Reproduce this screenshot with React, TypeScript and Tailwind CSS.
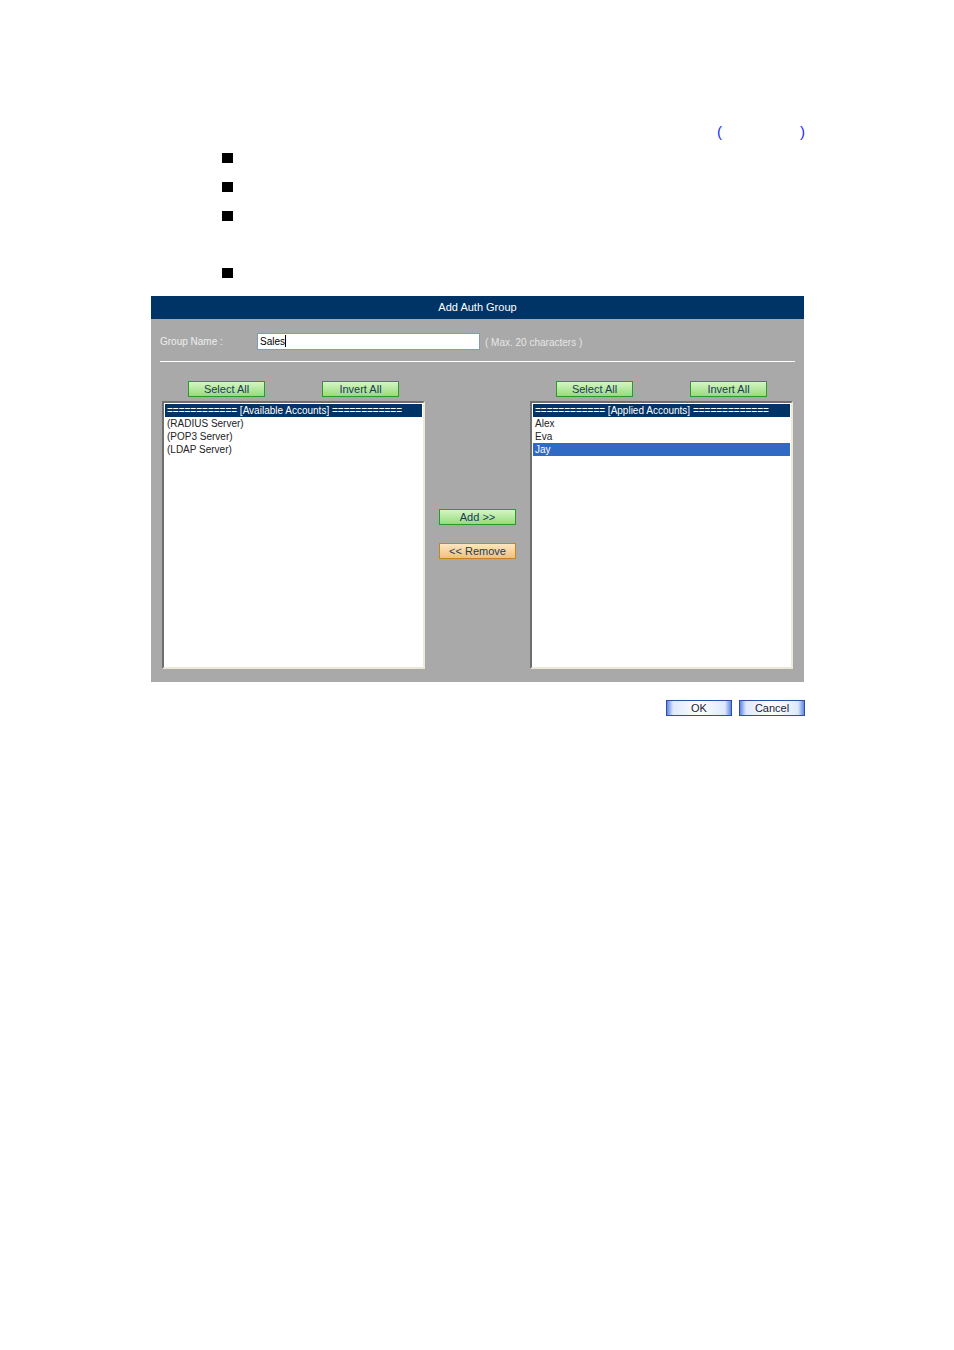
const font = { fontFamily: '"Liberation Sans", Arial, sans-serif' }

function GreenButton({ label }: { label: string }) {
  return (
    <button className="w-[77px] h-[16px] border border-[#2a9a2a] bg-gradient-to-b from-[#d6f5c4] to-[#94dc7c] text-[11px] leading-[13px] text-[#1c3a5c] text-center">
      {label}
    </button>
  )
}

function ListBox({ title, items, selected }: { title: string; items: string[]; selected?: string }) {
  return (
    <div className="w-[263px] h-[268px] bg-white border-t-2 border-l-2 border-t-[#6f6f6f] border-l-[#6f6f6f] border-b-2 border-r-2 border-b-[#ece9d8] border-r-[#ece9d8] p-[1px]">
      <div className="h-[13px] bg-[#003366] text-white text-[10px] leading-[13px] pl-[2px] whitespace-nowrap">
        {title}
      </div>
      {items.map((it) => (
        <div
          key={it}
          className={
            it === selected
              ? 'h-[13px] bg-[#316ac5] text-white text-[10px] leading-[13px] pl-[2px]'
              : 'h-[13px] text-[#222] text-[10px] leading-[13px] pl-[2px]'
          }
        >
          {it}
        </div>
      ))}
    </div>
  )
}

function BlueButton({ label }: { label: string }) {
  return (
    <button className="w-[66px] h-[16px] border border-[#2b4fa8] bg-[linear-gradient(to_right,#5f86e6_0px,#dfe8fb_6px,#ffffff_50%,#dfe8fb_calc(100%-6px),#5f86e6_100%)] text-[11px] leading-[12px] text-[#1a1a3a] text-center">
      {label}
    </button>
  )
}

export default function App() {
  return (
    <div className="w-[954px] h-[1350px] bg-white" style={font}>
      <div className="pt-[122px]">
        <div className="ml-[717px] w-[88px] flex justify-between text-[#1a2cff] text-[15px] leading-[20px]">
          <span>(</span>
          <span>)</span>
        </div>
        <div className="ml-[222px] mt-[11px] flex flex-col">
          <div className="w-[11px] h-[10px] bg-black" />
          <div className="w-[11px] h-[10px] bg-black mt-[19px]" />
          <div className="w-[11px] h-[10px] bg-black mt-[19px]" />
          <div className="w-[11px] h-[10px] bg-black mt-[47px]" />
        </div>
      </div>

      <div className="ml-[151px] mt-[18px] w-[653px]">
        <div className="h-[23px] bg-[#003366] text-white text-[11px] leading-[23px] text-center">
          Add Auth Group
        </div>
        <div className="bg-[#a9a9a9] pb-[13px]">
          <div className="flex items-center pt-[13px] pl-[9px]">
            <span className="w-[97px] text-[10px] text-[#eeeeee]">Group Name :</span>
            <div className="w-[223px] h-[17px] bg-white border border-[#7f9db9] text-[10px] leading-[15px] pl-[2px] text-black flex items-center">
              Sales<span className="inline-block w-[1px] h-[12px] bg-black" />
            </div>
            <span className="ml-[5px] mt-[3px] text-[10px] text-[#e6e6e6]">( Max. 20 characters )</span>
          </div>
          <div className="mx-[9px] mt-[11px] h-[1px] bg-white" />

          <div className="flex pl-[11px] pt-[19px]">
            <div className="flex flex-col">
              <div className="flex justify-between px-[26px] h-[20px]">
                <GreenButton label="Select All" />
                <GreenButton label="Invert All" />
              </div>
              <ListBox
                title="============ [Available Accounts] ============"
                items={['(RADIUS Server)', '(POP3 Server)', '(LDAP Server)']}
              />
            </div>

            <div className="w-[105px] flex flex-col items-center pt-[128px] gap-[18px]">
              <GreenButton label="Add >>" />
              <button className="w-[77px] h-[16px] border border-[#c8841e] bg-gradient-to-b from-[#fde6c2] to-[#f3bf7a] text-[11px] leading-[13px] text-[#1c3a5c] text-center">
                &lt;&lt; Remove
              </button>
            </div>

            <div className="flex flex-col">
              <div className="flex justify-between px-[26px] h-[20px]">
                <GreenButton label="Select All" />
                <GreenButton label="Invert All" />
              </div>
              <ListBox
                title="============ [Applied Accounts] ============="
                items={['Alex', 'Eva', 'Jay']}
                selected="Jay"
              />
            </div>
          </div>
        </div>

        <div className="flex justify-end gap-[7px] mt-[18px] mr-[-1px]">
          <BlueButton label="OK" />
          <BlueButton label="Cancel" />
        </div>
      </div>
    </div>
  )
}
